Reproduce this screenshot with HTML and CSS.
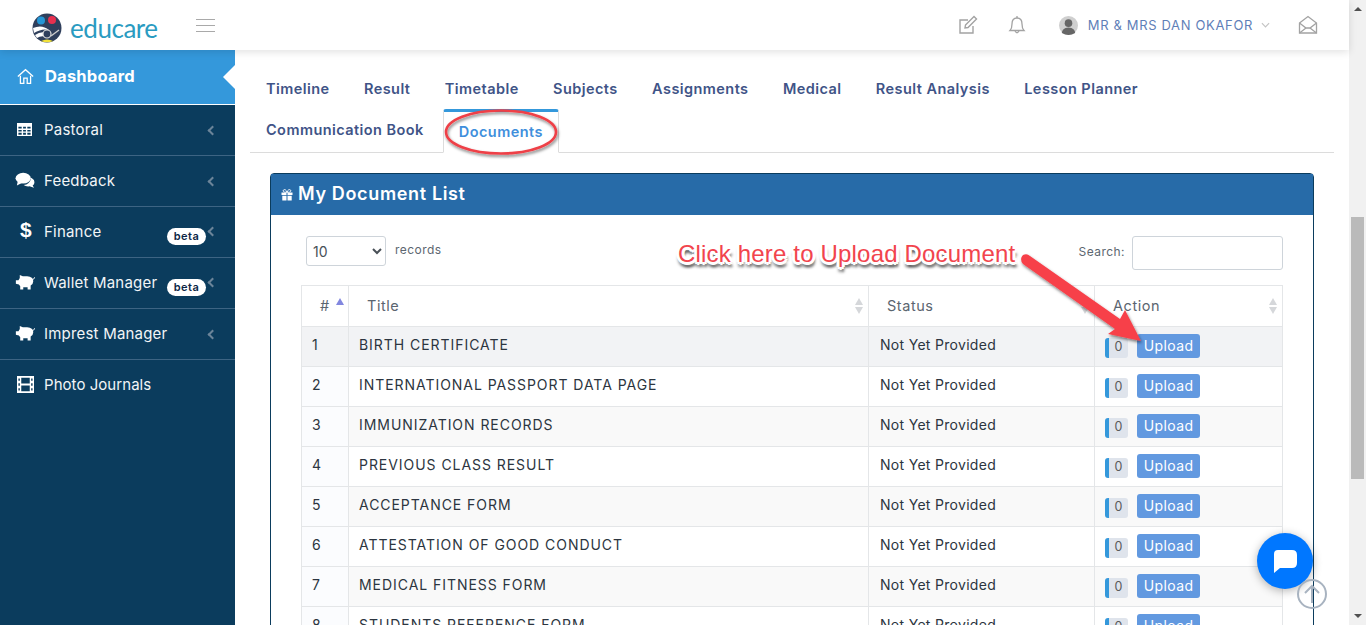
FILE: index.html
```html
<!DOCTYPE html>
<html lang="en">

<head>
    <title>My Document List</title>
    <link rel="stylesheet" href="styles.css">
</head>

<body>
    <div class="viewport">
        <header class="topbar">
            <div class="brand">
                <svg class="logoMark" viewBox="0 0 30 30">
                    <circle cx="15" cy="15" r="14.5" fill="#2f3f5c" />
                    <circle cx="9" cy="7.5" r="4" fill="#2496d6" />
                    <circle cx="20" cy="7" r="4" fill="#e8304f" />
                    <path d="M1 15 Q10 11 17 17 Q10 15 2 20Z" fill="#fff" />
                    <path d="M3 22 Q10 17 17 21 L15 24 Q9 22 5 25Z" fill="#fff" />
                    <circle cx="15" cy="21" r="4" fill="#2f3f5c" stroke="#ddd" stroke-width="1.2" />
                    <path d="M9 28 Q15 25 21 28 Q15 30.5 9 28Z" fill="#f2e23a" />
                    <path d="M19 23 L27 17" stroke="#ccc" stroke-width="1.4" />
                </svg>
                <span class="logoText">educare</span>
            </div>
            <div class="burger"><span></span><span></span><span></span></div>
            <div class="topActions">
                <svg class="topIcon editIcon" viewBox="0 0 20 20" fill="none" stroke="#a3a3a3" stroke-width="1.4">
                    <path d="M15 11 V18 H2 V5 H10" />
                    <path d="M7.5 10 L16 1.5 L18.5 4 L10 12.5 L7 13Z" />
                </svg>
                <svg class="topIcon bellIcon" viewBox="0 0 20 20" fill="none" stroke="#a3a3a3" stroke-width="1.3">
                    <path d="M3 15.5 Q5 13.5 5 9 Q5 3 10 3 Q15 3 15 9 Q15 13.5 17 15.5Z" />
                    <path d="M8 16 Q10 19.5 12 16" />
                    <path d="M10 1 V3" />
                </svg>
                <div class="userBox">
                    <svg class="avatar" viewBox="0 0 20 20">
                        <circle cx="10" cy="10" r="10" fill="#cfcfcf" />
                        <circle cx="10" cy="7.5" r="4" fill="#666" />
                        <path d="M3 18 Q3 12.5 10 12 Q17 12.5 17 18 Q10 22 3 18Z" fill="#666" />
                    </svg>
                    <span class="userName">MR &amp; MRS DAN OKAFOR</span>
                    <svg class="userCaret" viewBox="0 0 10 6" fill="none" stroke="#c4c4c4" stroke-width="1.3">
                        <path d="M1 1 L5 5 L9 1" />
                    </svg>
                </div>
                <svg class="topIcon mailIcon" viewBox="0 0 20 20" fill="none" stroke="#a3a3a3" stroke-width="1.3">
                    <path d="M1.5 8 L10 1.5 L18.5 8 V18 H1.5Z" />
                    <path d="M1.5 8 L8 13 H12 L18.5 8" />
                    <path d="M1.5 18 L8 13 M18.5 18 L12 13" />
                </svg>
            </div>
        </header>

        <div class="content">
            <nav class="sidebar">
                <a class="navItem active">
                    <svg class="navIcon" viewBox="0 0 20 20" fill="none" stroke="#fff" stroke-width="1.5">
                        <path d="M1 10 L10 2 L19 10" />
                        <path d="M4 9 V18 H8 V12 H12 V18 H16 V9" />
                    </svg>
                    <span class="navLabel">Dashboard</span>
                </a>
                <a class="navItem">
                    <svg class="navIcon tableIcon" viewBox="2 3 16 14" fill="#fff">
                        <path d="M2 3 H18 V17 H2Z M3.5 7 V9 H7 V7Z M8.5 7 V9 H11.5 V7Z M13 7 V9 H16.5 V7Z M3.5 10.5 V12 H7 V10.5Z M8.5 10.5 V12 H11.5 V10.5Z M13 10.5 V12 H16.5 V10.5Z M3.5 13.5 V15.5 H7 V13.5Z M8.5 13.5 V15.5 H11.5 V13.5Z M13 13.5 V15.5 H16.5 V13.5Z" fill-rule="evenodd" />
                    </svg>
                    <span class="navLabel">Pastoral</span>
                    <span class="navCaret"></span>
                </a>
                <a class="navItem">
                    <svg class="navIcon wide" viewBox="0 0 22 20" fill="#fff">
                        <ellipse cx="9" cy="8" rx="8.5" ry="6" />
                        <path d="M3 11 L2 16 L8 13Z" />
                        <path d="M18 7.5 Q21.5 9.5 21.5 12.5 Q21.5 15 19.5 16 L21 18.5 L16 17 Q12 17.5 9.5 15.5 Q16 15.5 18 7.5Z" />
                    </svg>
                    <span class="navLabel">Feedback</span>
                    <span class="navCaret"></span>
                </a>
                <a class="navItem">
                    <span class="navIcon dollar">$</span>
                    <span class="navLabel">Finance</span>
                    <span class="betaTag">beta</span>
                    <span class="navCaret"></span>
                </a>
                <a class="navItem">
                    <svg class="navIcon wide" viewBox="0 0 23 20" fill="#fff">
                        <path d="M21 9 Q21 4 14 3.5 L9 3.5 L5.5 2 V5.5 L4 8 H1 V12 L4.5 13 L6 15 V18.5 H9.5 V16 H14.5 V18.5 H18 V14 Q21 12 21 9Z" />
                        <path d="M20 7 Q22.5 7 22.5 4.5" fill="none" stroke="#fff" stroke-width="1" />
                    </svg>
                    <span class="navLabel">Wallet Manager</span>
                    <span class="betaTag">beta</span>
                    <span class="navCaret"></span>
                </a>
                <a class="navItem">
                    <svg class="navIcon wide" viewBox="0 0 23 20" fill="#fff">
                        <path d="M21 9 Q21 4 14 3.5 L9 3.5 L5.5 2 V5.5 L4 8 H1 V12 L4.5 13 L6 15 V18.5 H9.5 V16 H14.5 V18.5 H18 V14 Q21 12 21 9Z" />
                        <path d="M20 7 Q22.5 7 22.5 4.5" fill="none" stroke="#fff" stroke-width="1" />
                    </svg>
                    <span class="navLabel">Imprest Manager</span>
                    <span class="navCaret"></span>
                </a>
                <a class="navItem">
                    <svg class="navIcon" viewBox="1 3 18 14" preserveAspectRatio="none" fill="#fff">
                        <path d="M1 3 H19 V17 H1Z M2.5 5 V7 H4 V5Z M2.5 9 V11 H4 V9Z M2.5 13 V15 H4 V13Z M16 5 V7 H17.5 V5Z M16 9 V11 H17.5 V9Z M16 13 V15 H17.5 V13Z M5.5 4.5 V9.2 H14.5 V4.5Z M5.5 10.8 V15.5 H14.5 V10.8Z" fill-rule="evenodd" />
                    </svg>
                    <span class="navLabel">Photo Journals</span>
                </a>
            </nav>

            <main class="main">
                <div class="tabs">
                    <a class="tab">Timeline</a>
                    <a class="tab">Result</a>
                    <a class="tab">Timetable</a>
                    <a class="tab">Subjects</a>
                    <a class="tab">Assignments</a>
                    <a class="tab">Medical</a>
                    <a class="tab">Result Analysis</a>
                    <a class="tab">Lesson Planner</a>
                    <a class="tab">Communication Book</a>
                    <a class="tab current">Documents</a>
                </div>

                <section class="panel">
                    <h2 class="panelHead">
                        <svg class="giftIcon" viewBox="0 0 12 12" fill="#fff">
                            <path d="M0.5 3.5 H5.5 V6 H0.5Z M6.5 3.5 H11.5 V6 H6.5Z M1.3 6.7 H5.5 V11.5 H1.3Z M6.5 6.7 H10.7 V11.5 H6.5Z" />
                            <path d="M6 3.2 C3 3.5 1.5 2.5 2.5 1 C3.5 0 5.5 1 6 3.2 C6.5 1 8.5 0 9.5 1 C10.5 2.5 9 3.5 6 3.2" fill="none" stroke="#fff" stroke-width="1" />
                        </svg>
                        <span>My Document List</span>
                    </h2>
                    <div class="panelBody">
                        <div class="tableTools">
                            <div class="lengthBox">
                                <select class="lengthSelect">
                                    <option>10</option>
                                </select>
                                <span class="toolLabel">records</span>
                            </div>
                            <div class="searchBox">
                                <span class="toolLabel">Search:</span>
                                <input class="searchInput" type="text">
                            </div>
                        </div>
                        <table class="docTable">
                            <thead>
                                <tr>
                                    <th class="colNum sortedAsc">#</th>
                                    <th class="colTitle sortable">Title</th>
                                    <th class="colStatus sortable">Status</th>
                                    <th class="colAction sortable">Action</th>
                                </tr>
                            </thead>
                            <tbody>
                                <tr>
                                    <td class="num">1</td>
                                    <td class="docName">BIRTH CERTIFICATE</td>
                                    <td class="docStatus">Not Yet Provided</td>
                                    <td class="docAction"><span class="countTag">0</span><a class="uploadBtn">Upload</a></td>
                                </tr>
                                <tr>
                                    <td class="num">2</td>
                                    <td class="docName">INTERNATIONAL PASSPORT DATA PAGE</td>
                                    <td class="docStatus">Not Yet Provided</td>
                                    <td class="docAction"><span class="countTag">0</span><a class="uploadBtn">Upload</a></td>
                                </tr>
                                <tr>
                                    <td class="num">3</td>
                                    <td class="docName">IMMUNIZATION RECORDS</td>
                                    <td class="docStatus">Not Yet Provided</td>
                                    <td class="docAction"><span class="countTag">0</span><a class="uploadBtn">Upload</a></td>
                                </tr>
                                <tr>
                                    <td class="num">4</td>
                                    <td class="docName">PREVIOUS CLASS RESULT</td>
                                    <td class="docStatus">Not Yet Provided</td>
                                    <td class="docAction"><span class="countTag">0</span><a class="uploadBtn">Upload</a></td>
                                </tr>
                                <tr>
                                    <td class="num">5</td>
                                    <td class="docName">ACCEPTANCE FORM</td>
                                    <td class="docStatus">Not Yet Provided</td>
                                    <td class="docAction"><span class="countTag">0</span><a class="uploadBtn">Upload</a></td>
                                </tr>
                                <tr>
                                    <td class="num">6</td>
                                    <td class="docName">ATTESTATION OF GOOD CONDUCT</td>
                                    <td class="docStatus">Not Yet Provided</td>
                                    <td class="docAction"><span class="countTag">0</span><a class="uploadBtn">Upload</a></td>
                                </tr>
                                <tr>
                                    <td class="num">7</td>
                                    <td class="docName">MEDICAL FITNESS FORM</td>
                                    <td class="docStatus">Not Yet Provided</td>
                                    <td class="docAction"><span class="countTag">0</span><a class="uploadBtn">Upload</a></td>
                                </tr>
                                <tr>
                                    <td class="num">8</td>
                                    <td class="docName">STUDENTS REFERENCE FORM</td>
                                    <td class="docStatus">Not Yet Provided</td>
                                    <td class="docAction"><span class="countTag">0</span><a class="uploadBtn">Upload</a></td>
                                </tr>
                            </tbody>
                        </table>
                    </div>
                </section>
            </main>
        </div>
    </div>

    <div class="scrollbar">
        <span class="scrollArrow up"></span>
        <span class="scrollThumb"></span>
        <span class="scrollArrow down"></span>
    </div>

    <!-- annotations drawn on top of the screenshot -->
    <svg class="markup" viewBox="0 0 1366 625" fill="none">
        <defs>
            <filter id="markShadow" x="-20%" y="-20%" width="140%" height="140%">
                <feDropShadow dx="1" dy="2" stdDeviation="1.6" flood-color="#000" flood-opacity="0.5" />
            </filter>
        </defs>
        <ellipse cx="501" cy="132" rx="55" ry="21.5" stroke="#ee3f46" stroke-width="2.6" filter="url(#markShadow)" />
        <path d="M1030 256 L1120 319 L1125 310 L1141 341 L1108 334 L1115 329 L1023 264 Q1019 259 1023 255 Q1027 253 1030 256Z" fill="#f7404a" filter="url(#markShadow)" />
    </svg>
    <div class="clickNote">Click here to Upload Document</div>

    <a class="chatBtn">
        <svg viewBox="0 0 28 28" fill="#fff">
            <path d="M7 3 H21 Q26 3 26 8 V16 Q26 21 21 21 H9 L3 26 V7 Q3 3 7 3Z" />
        </svg>
    </a>
    <a class="toTop">
        <svg viewBox="0 0 30 30" fill="none" stroke="#a8b3c0" stroke-width="2">
            <circle cx="15" cy="15" r="14" />
            <path d="M15 24 V7 M8 14 L15 7 L22 14" />
        </svg>
    </a>
</body>

</html>
```

FILE: styles.css
```css
* {
    box-sizing: border-box;
}

html,
body {
    margin: 0;
    height: 625px;
    overflow: hidden;
}

body {
    display: flex;
    font-family: "Inter", "Liberation Sans", sans-serif;
    background-color: white;
}

.viewport {
    flex: 1;
    min-width: 0;
    display: flex;
    flex-direction: column;
}

/* top bar */
.topbar {
    height: 50px;
    flex: none;
    display: flex;
    align-items: center;
    background-color: white;
    box-shadow: 0 2px 8px rgba(0, 0, 0, 0.12);
    position: relative;
    z-index: 2;
}

.brand {
    width: 196px;
    padding-left: 32px;
    padding-top: 5px;
    display: flex;
    align-items: center;
    gap: 8px;
}

.logoMark {
    width: 30px;
    height: 30px;
}

.logoText {
    font-family: "Lato", sans-serif;
    font-size: 26px;
    line-height: 30px;
    letter-spacing: -0.45px;
    color: #2a9bc1;
}

.burger {
    width: 19px;
    display: flex;
    flex-direction: column;
    gap: 5px;
}

.burger span {
    height: 1px;
    background-color: #a9a9a9;
}

.topActions {
    margin-left: auto;
    padding-right: 31px;
    display: flex;
    align-items: center;
}

.topIcon {
    width: 20px;
    height: 20px;
}

.bellIcon {
    margin-left: 29px;
}

.userBox {
    margin-left: 32px;
    display: flex;
    align-items: center;
}

.avatar {
    width: 19px;
    height: 19px;
    margin-right: 10px;
}

.userName {
    font-size: 13px;
    letter-spacing: 0.65px;
    color: #5f7fb8;
}

.userCaret {
    width: 9px;
    height: 6px;
    margin-left: 8px;
}

.mailIcon {
    margin-left: 28px;
}

/* sidebar */
.content {
    flex: 1;
    min-height: 0;
    display: flex;
}

.sidebar {
    width: 235px;
    flex: none;
    background-color: #0b3c5d;
}

.navItem {
    height: 51px;
    display: flex;
    align-items: center;
    padding: 0 16px 2px 17px;
    color: #f2f5f7;
    font-size: 15px;
    letter-spacing: 0.2px;
    border-bottom: 1px solid #3d6483;
}

.navItem:last-child {
    border-bottom: none;
    letter-spacing: 0.05px;
}

.navItem.active {
    height: 55px;
    background-color: #3498db;
    border-bottom: 1px solid white;
    position: relative;
    font-size: 16.5px;
    font-weight: 700;
    color: white;
}

.navItem.active .navIcon {
    margin-right: 11px;
}

.navItem.active::after {
    content: "";
    position: absolute;
    right: 0;
    top: 15px;
    border: 8px solid transparent;
    border-left: none;
    border-right: 12px solid white;
    border-top-width: 12px;
    border-bottom-width: 12px;
}

.navIcon {
    width: 17px;
    height: 17px;
    flex: none;
    margin-right: 10px;
}

.navIcon.tableIcon {
    width: 15px;
    margin-right: 12px;
}

.navIcon.wide {
    width: 20px;
    height: 18px;
    margin-left: -2px;
    margin-right: 9px;
}

.navIcon.dollar {
    font-family: "Liberation Sans", sans-serif;
    font-size: 21px;
    font-weight: 700;
    line-height: 17px;
    text-align: right;
    color: white;
    margin-top: -3px;
    margin-right: 12px;
    padding-right: 0;
    width: 15px;
}

.navLabel {
    flex: 1;
    white-space: nowrap;
}

.betaTag {
    width: 39px;
    height: 17px;
    margin-top: 11px;
    margin-right: 1px;
    border-radius: 9px;
    background-color: white;
    color: #0b2545;
    font-size: 11px;
    font-weight: 600;
    letter-spacing: 0.5px;
    line-height: 17px;
    text-align: center;
}

.navCaret {
    width: 7px;
    height: 7px;
    margin-left: 4px;
    margin-right: 3px;
    margin-top: 2px;
    flex: none;
    border-left: 2px solid #6b8499;
    border-bottom: 2px solid #6b8499;
    transform: rotate(45deg);
}

.betaTag + .navCaret {
    margin-left: 2px;
    margin-top: 1px;
}

/* tabs */
.main {
    flex: 1;
    min-width: 0;
    padding: 0 15px;
}

.tabs {
    display: flex;
    flex-wrap: wrap;
    padding-top: 18px;
    padding-right: 150px;
    border-bottom: 1px solid #dcdcdc;
}

.tab {
    height: 41px;
    padding: 12px 17.2px 0;
    font-size: 14.5px;
    font-weight: 600;
    letter-spacing: 0.44px;
    color: #3f5487;
    white-space: nowrap;
}

.tab:first-child,
.tab:nth-child(9) {
    padding-left: 16px;
}

.tab:nth-child(9) {
    padding-right: 19px;
}

.tab.current {
    height: 44px;
    margin-bottom: -1px;
    padding: 11px 15px 0;
    color: #3f8fdc;
    background-color: white;
    border: 1px solid #dcdcdc;
    border-top: 3px solid #3498db;
    border-bottom-color: white;
    border-radius: 3px 3px 0 0;
}

/* panel */
.panel {
    margin: 20px 20px 0;
    border: 1px solid #0b3c5d;
    border-radius: 4px;
    width: 1044px;
}

.panelHead {
    margin: 0;
    height: 41px;
    display: flex;
    align-items: center;
    gap: 5px;
    padding-left: 10px;
    padding-bottom: 2px;
    background-color: #276ba8;
    color: white;
    font-size: 18px;
    font-weight: 600;
    letter-spacing: 0.65px;
}

.giftIcon {
    width: 12px;
    height: 12px;
    margin-top: 2px;
}

.panelBody {
    padding: 21px 30px 0;
}

.tableTools {
    height: 49px;
    display: flex;
    justify-content: space-between;
    align-items: flex-start;
}

.lengthBox {
    padding-left: 5px;
    display: flex;
    align-items: flex-start;
    gap: 9px;
}

.lengthSelect {
    width: 80px;
    height: 30px;
    padding-left: 2px;
    border: 1px solid #ced4da;
    border-radius: 3px;
    background-color: white;
    color: #495057;
    font-family: "Inter", sans-serif;
    font-size: 14px;
}

.toolLabel {
    font-size: 12px;
    letter-spacing: 0.45px;
    color: #5c6670;
    line-height: 28px;
}

.searchBox {
    display: flex;
    align-items: flex-start;
    gap: 7px;
}

.searchBox .toolLabel {
    line-height: 32px;
}

.searchInput {
    width: 151px;
    height: 34px;
    border: 1px solid #ced4da;
    border-radius: 3px;
}

.docTable {
    width: 982px;
    table-layout: fixed;
    border-collapse: collapse;
    font-size: 14px;
    letter-spacing: 0.55px;
    color: #2c3540;
}

.docTable th,
.docTable td {
    border: 1px solid #e4e6e8;
}

.docTable th {
    height: 41px;
    padding: 0 0 2px 18px;
    font-size: 14.5px;
    font-weight: 400;
    text-align: left;
    color: #5b6570;
    position: relative;
}

.colNum {
    width: 47px;
}

.colTitle {
    width: 520px;
}

.colStatus {
    width: 226px;
}

.sortable::before,
.sortable::after,
.sortedAsc::after {
    content: "";
    position: absolute;
    right: 5px;
    border-left: 4px solid transparent;
    border-right: 4px solid transparent;
}

.sortable::before {
    top: 12px;
    border-bottom: 7px solid #d5d7da;
}

.sortable::after {
    top: 21px;
    border-top: 7px solid #d5d7da;
}

.sortedAsc::after {
    top: 12px;
    right: 4px;
    border-bottom: 7px solid #8287df;
}

.docTable td {
    height: 40px;
    padding: 0 10px 4px;
    white-space: nowrap;
}

.docTable td.docName {
    letter-spacing: 0.95px;
}

.docTable td.docStatus {
    padding-left: 11px;
    letter-spacing: 0.3px;
}

.docTable td.docAction {
    padding-bottom: 2px;
}

.docTable td.num {
    background-color: #fbfcfe;
}

.docTable tbody tr:nth-child(odd) td:not(.num) {
    background-color: #f9f9f9;
}

.docTable tbody tr:first-child td,
.docTable tbody tr:first-child td:not(.num) {
    background-color: #f2f3f5;
}

.countTag {
    display: inline-block;
    vertical-align: middle;
    width: 23px;
    height: 20px;
    margin-top: 5px;
    border-left: 4px solid #3498db;
    border-radius: 3px;
    background-color: #dfe4ec;
    color: #5a5a5a;
    font-size: 12.5px;
    line-height: 18px;
    text-align: center;
    letter-spacing: 0;
}

.uploadBtn {
    display: inline-block;
    vertical-align: middle;
    width: 63px;
    height: 24px;
    margin-left: 9px;
    border-radius: 3px;
    background-color: #6299e0;
    color: white;
    font-size: 14px;
    letter-spacing: 0.4px;
    line-height: 24px;
    text-align: center;
}

/* browser scrollbar */
.scrollbar {
    width: 17px;
    flex: none;
    display: flex;
    flex-direction: column;
    align-items: center;
    background-color: #f1f1f1;
}

.scrollThumb {
    width: 13px;
    height: 262px;
    margin-top: 206px;
    background-color: #bababa;
}

.scrollArrow {
    width: 0;
    border-left: 4px solid transparent;
    border-right: 4px solid transparent;
}

.scrollArrow.up {
    margin-top: 7px;
    border-bottom: 4px solid #505050;
}

.scrollArrow.down {
    margin-top: 135px;
    border-top: 4px solid #505050;
}

/* overlays */
.markup {
    position: absolute;
    left: 0;
    top: 0;
    width: 1366px;
    height: 625px;
    pointer-events: none;
    z-index: 3;
}

.clickNote {
    position: absolute;
    left: 678px;
    top: 240px;
    z-index: 3;
    font-family: "Liberation Sans", sans-serif;
    font-size: 24px;
    letter-spacing: 0.18px;
    line-height: 28px;
    color: #f2444d;
    white-space: nowrap;
    text-shadow: 1px 0 0 white, -1px 0 0 white, 0 1px 0 white, 0 -1px 0 white,
        2px 2px 0 white, -2px -2px 0 white, 2px -2px 0 white, -2px 2px 0 white,
        3px 0 0 white, -3px 0 0 white, 0 3px 0 white, 0 -3px 0 white,
        2px 5px 3px rgba(0, 0, 0, 0.75), -1px 5px 3px rgba(0, 0, 0, 0.5);
}

.chatBtn {
    position: absolute;
    left: 1257px;
    top: 533px;
    z-index: 4;
    width: 56px;
    height: 56px;
    display: flex;
    align-items: center;
    justify-content: center;
    border-radius: 50%;
    background-color: #0077ff;
    box-shadow: 0 2px 10px rgba(0, 0, 0, 0.3);
}

.chatBtn svg {
    width: 28px;
    height: 28px;
}

.toTop {
    position: absolute;
    left: 1297px;
    top: 579px;
    z-index: 5;
    width: 30px;
    height: 30px;
}

.toTop svg {
    width: 30px;
    height: 30px;
    display: block;
}
```
